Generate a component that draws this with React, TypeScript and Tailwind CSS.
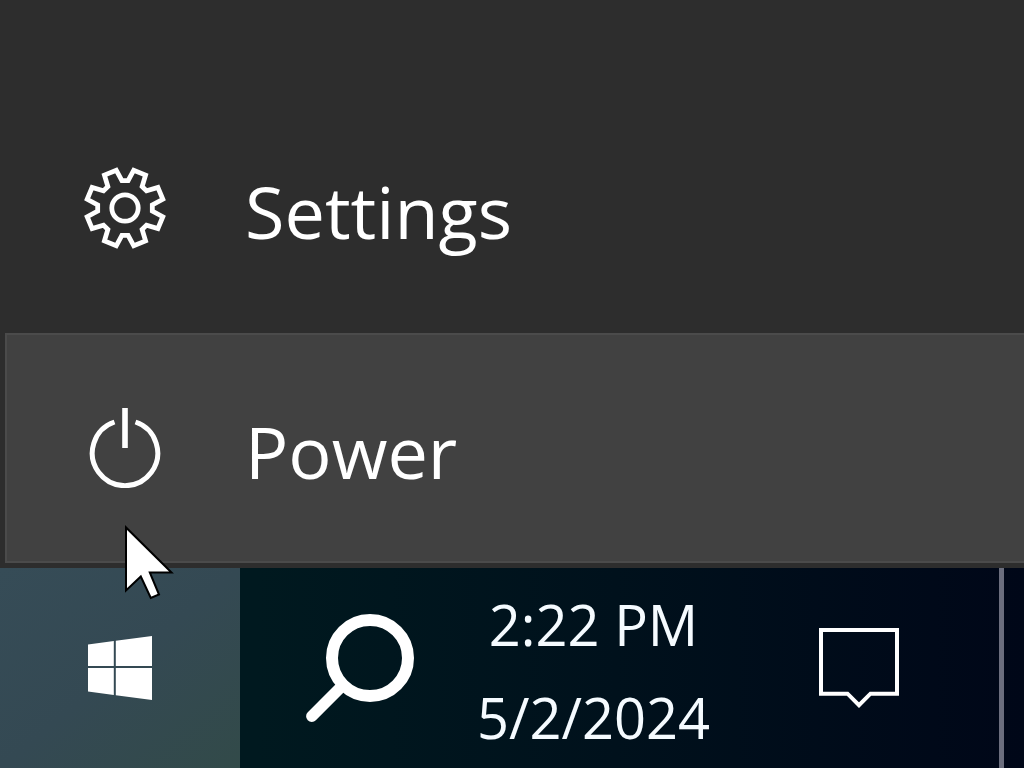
import type { ReactNode } from "react";

// Eight-tooth gear outline, centred in an 80x80 box
const gearPoints = Array.from({ length: 8 })
  .flatMap((_, i) => {
    const base = i * 45;
    return [
      [base - 6.5, 27.5],
      [base + 6.5, 27.5],
      [base + 13, 38.8],
      [base + 32, 38.8],
    ];
  })
  .map(([deg, r]) => {
    const a = (deg * Math.PI) / 180;
    return `${(40 + r * Math.sin(a)).toFixed(2)},${(40 - r * Math.cos(a)).toFixed(2)}`;
  })
  .join(" ");

function GearIcon() {
  return (
    <svg className="size-20 shrink-0 overflow-visible" viewBox="0 0 80 80" fill="none" stroke="currentColor" strokeWidth="4.8" aria-hidden="true">
      <polygon points={gearPoints} />
      <circle cx="40" cy="40" r="13.2" />
    </svg>
  );
}

function PowerIcon() {
  return (
    <svg className="size-20 shrink-0" viewBox="0 0 80 80" fill="none" stroke="currentColor" strokeWidth="5" aria-hidden="true">
      <path d="M29.5 14 A32.7 32.7 0 1 0 50.5 14" />
      <path d="M40 0V40" strokeWidth="5.6" />
    </svg>
  );
}

function WindowsLogo() {
  return (
    <svg className="size-16" viewBox="0 0 64 64" fill="white" aria-hidden="true">
      <polygon points="0,8.4 25.8,5 25.8,30 0,30" />
      <polygon points="27.8,4.7 64,0 64,30 27.8,30" />
      <polygon points="0,32 25.8,32 25.8,59 0,55.4" />
      <polygon points="27.8,32 64,32 64,64 27.8,59.3" />
    </svg>
  );
}

function SearchIcon() {
  return (
    <svg className="size-[108px]" viewBox="0 0 108 108" fill="none" stroke="currentColor" strokeWidth="12" aria-hidden="true">
      <circle cx="64" cy="44" r="38" />
      <path d="M37 71L5.8 102.2" strokeLinecap="round" strokeWidth="11.4" />
    </svg>
  );
}

function ActionCenterIcon() {
  return (
    <svg className="size-20" viewBox="0 0 80 80" fill="none" stroke="currentColor" strokeWidth="4" aria-hidden="true">
      <path d="M2 2H78V65.7H51.5L40 77.2L28.5 65.7H2Z" />
    </svg>
  );
}

function Cursor() {
  return (
    <svg
      className="pointer-events-none absolute bottom-[167px] left-[122px] h-[78px] w-[54px]"
      viewBox="0 0 54 78"
      aria-hidden="true"
    >
      <path
        d="M4 4.5V67.5L18.8 53.5L28.8 75L37 71.5L27.8 49.5H49.5Z"
        fill="white"
        stroke="black"
        strokeWidth="2"
      />
    </svg>
  );
}

interface MenuItemProps {
  icon: ReactNode;
  label: string;
  active?: boolean;
}

function MenuItem({ icon, label, active = false }: MenuItemProps) {
  return (
    <button
      type="button"
      className={`my-[5px] ml-[5px] flex h-[230px] items-center gap-20 border-2 border-r-0 pl-[78px] text-left text-7xl ${
        active ? "border-[#4b4b4b] bg-[#414141]" : "border-transparent"
      }`}
    >
      {icon}
      <span className="pt-1.5">{label}</span>
    </button>
  );
}

export default function App() {
  return (
    <div className="relative flex min-h-screen flex-col bg-[#2d2d2d] font-['Open_Sans','Noto_Sans',sans-serif] text-white">
      {/* Start menu rail */}
      <nav className="flex flex-1 flex-col justify-end">
        <MenuItem icon={<GearIcon />} label="Settings" />
        <MenuItem icon={<PowerIcon />} label="Power" active />
      </nav>

      {/* Taskbar */}
      <footer className="flex h-[200px] bg-linear-to-r from-[#00191f] from-25% via-[#00111c] via-60% to-[#000718]">
        <button
          type="button"
          aria-label="Start"
          className="flex w-60 shrink-0 items-center justify-center bg-linear-to-br from-[#364c57] via-[#344953] to-[#324a49]"
        >
          <WindowsLogo />
        </button>
        <button type="button" aria-label="Search" className="flex w-60 shrink-0 items-center justify-center">
          <SearchIcon />
        </button>
        <button
          type="button"
          className="flex min-w-0 flex-1 flex-col items-center justify-center pt-1.5 pr-8 text-[56px] leading-[93px] whitespace-nowrap text-[#f5fbff]"
        >
          <span>2:22 PM</span>
          <span>5/2/2024</span>
        </button>
        <button type="button" aria-label="Action center" className="flex w-60 shrink-0 items-center justify-center">
          <ActionCenterIcon />
        </button>
        <button type="button" aria-label="Show desktop" className="ml-5 w-[25px] shrink-0 border-l-[5px] border-[#6b6e7e]" />
      </footer>

      <Cursor />
    </div>
  );
}
